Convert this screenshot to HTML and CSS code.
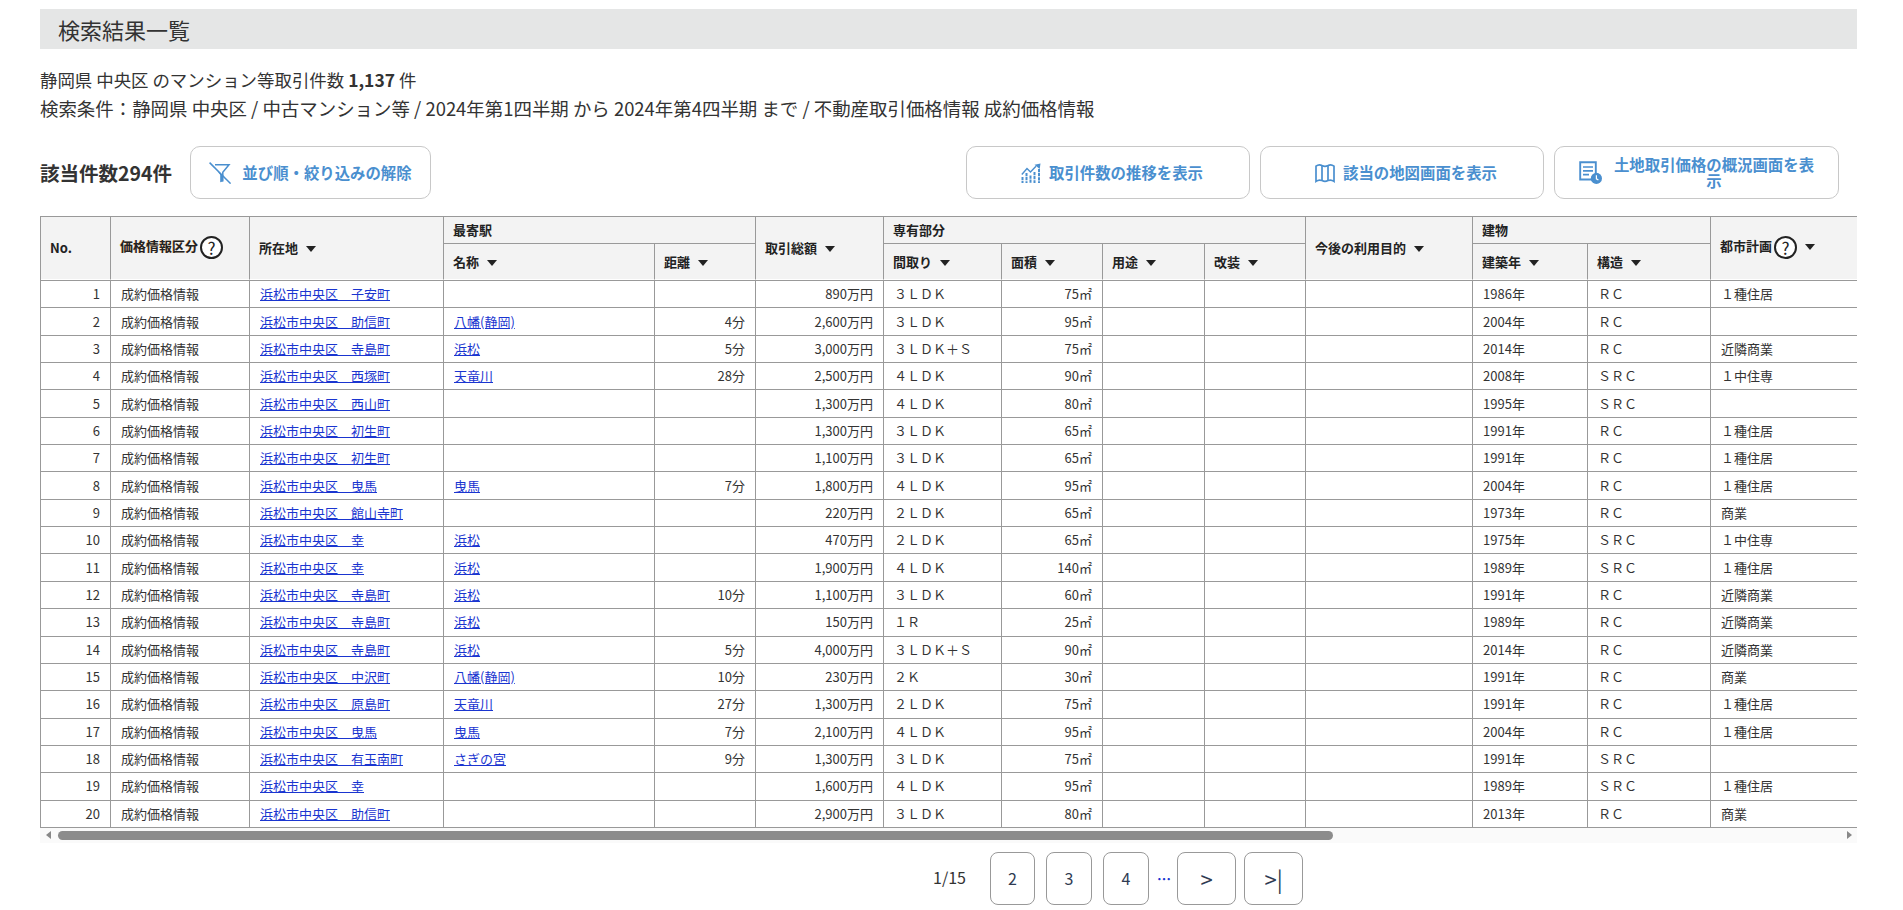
FILE: index.html
```html
<!DOCTYPE html>
<html lang="ja">
<head>
<meta charset="utf-8">
<title>検索結果一覧</title>
<link rel="stylesheet" href="styles.css">
</head>
<body>
<main class="page">
  <h1 class="title">検索結果一覧</h1>
  <div class="summary">
    <p class="sum-total">静岡県 中央区 のマンション等取引件数 <b>1,137</b> 件</p>
    <p class="sum-cond">検索条件：静岡県 中央区 / 中古マンション等 / 2024年第1四半期 から 2024年第4四半期 まで / 不動産取引価格情報 成約価格情報</p>
  </div>
  <div class="toolbar">
    <div class="count">該当件数294件</div>
    <button class="btn btn-reset">
      <svg class="ico ico-filter" viewBox="0 0 22 22"><path d="M6 2.8h14l-6.2 7.4v9.3" fill="none" stroke="currentColor" stroke-width="1.5"/><path d="M8.6 9.8l2.6 3v7.4l2.6-.6v-6.5z" fill="currentColor"/><path d="M.6.6l21 21" stroke="currentColor" stroke-width="1.5"/></svg>
      <span>並び順・絞り込みの解除</span>
    </button>
    <div class="actions">
      <button class="btn btn-shift">
        <svg class="ico" viewBox="0 0 20 20"><path d="M.8 11.5L6 5.5l3.5 3.5L15 3.2" fill="none" stroke="currentColor" stroke-width="1.4"/><path d="M13.5 1.8L19.5.5l-.8 5.5z" fill="currentColor"/><path d="M1.5 14v6M5.5 10v10M9.5 12.5V20M13.5 9v11M18 6v14" stroke="currentColor" stroke-width="2" stroke-dasharray="3.2 .9"/></svg>
        <span>取引件数の推移を表示</span>
      </button>
      <button class="btn btn-shift">
        <svg class="ico" viewBox="0 0 20 20"><path d="M1 3.2Q4 .8 7 2.6 10 4.2 13 2.6 16 .8 19 3.2V18.4Q16 16.2 13 17.6 10 19.2 7 17.6 4 16.2 1 18.4z" fill="none" stroke="currentColor" stroke-width="1.7"/><path d="M7 2.6v15M13 2.6v15" stroke="currentColor" stroke-width="1.7"/></svg>
        <span>該当の地図画面を表示</span>
      </button>
      <button class="btn btn-wrap">
        <svg class="ico ico-report" viewBox="0 0 23 23"><path d="M13 18.5H1.2V1.2h15.6v11" fill="none" stroke="currentColor" stroke-width="1.9"/><path d="M4 6h10M4 9.8h10M4 13.6h6" stroke="currentColor" stroke-width="1.7"/><circle cx="17.4" cy="17.4" r="5.6" fill="currentColor"/><path d="M17.4 14.2v3.6l2 1.2" fill="none" stroke="#fff" stroke-width="1.2"/></svg>
        <span>土地取引価格の概況画面を表示</span>
      </button>
    </div>
  </div>
  <div class="scroller">
    <table class="results">
      <colgroup>
        <col class="c-no"><col class="c-kind"><col class="c-addr"><col class="c-stn"><col class="c-dist"><col class="c-price"><col class="c-plan"><col class="c-area"><col class="c-use"><col class="c-reno"><col class="c-purp"><col class="c-year"><col class="c-str"><col class="c-city"><col class="c-rest">
      </colgroup>
      <thead>
        <tr>
          <th rowspan="2">No.</th>
          <th rowspan="2"><span class="fringe">価格情報区分</span><span class="help">?</span></th>
          <th rowspan="2">所在地<i class="sort"></i></th>
          <th colspan="2" class="top">最寄駅</th>
          <th rowspan="2">取引総額<i class="sort"></i></th>
          <th colspan="4" class="top">専有部分</th>
          <th rowspan="2">今後の利用目的<i class="sort"></i></th>
          <th colspan="2" class="top">建物</th>
          <th rowspan="2">都市計画<span class="help">?</span><i class="sort"></i></th>
          <th rowspan="2"></th>
        </tr>
        <tr>
          <th>名称<i class="sort"></i></th>
          <th>距離<i class="sort"></i></th>
          <th>間取り<i class="sort"></i></th>
          <th>面積<i class="sort"></i></th>
          <th>用途<i class="sort"></i></th>
          <th>改装<i class="sort"></i></th>
          <th>建築年<i class="sort"></i></th>
          <th>構造<i class="sort"></i></th>
        </tr>
      </thead>
      <tbody>
        <tr><td class="r">1</td><td>成約価格情報</td><td><a href="#">浜松市中央区　子安町</a></td><td></td><td class="r"></td><td class="r">890万円</td><td>３ＬＤＫ</td><td class="r">75㎡</td><td></td><td></td><td></td><td>1986年</td><td>ＲＣ</td><td>１種住居</td><td></td></tr>
        <tr><td class="r">2</td><td>成約価格情報</td><td><a href="#">浜松市中央区　助信町</a></td><td><a href="#">八幡(静岡)</a></td><td class="r">4分</td><td class="r">2,600万円</td><td>３ＬＤＫ</td><td class="r">95㎡</td><td></td><td></td><td></td><td>2004年</td><td>ＲＣ</td><td></td><td></td></tr>
        <tr><td class="r">3</td><td>成約価格情報</td><td><a href="#">浜松市中央区　寺島町</a></td><td><a href="#">浜松</a></td><td class="r">5分</td><td class="r">3,000万円</td><td>３ＬＤＫ＋Ｓ</td><td class="r">75㎡</td><td></td><td></td><td></td><td>2014年</td><td>ＲＣ</td><td>近隣商業</td><td></td></tr>
        <tr><td class="r">4</td><td>成約価格情報</td><td><a href="#">浜松市中央区　西塚町</a></td><td><a href="#">天竜川</a></td><td class="r">28分</td><td class="r">2,500万円</td><td>４ＬＤＫ</td><td class="r">90㎡</td><td></td><td></td><td></td><td>2008年</td><td>ＳＲＣ</td><td>１中住専</td><td></td></tr>
        <tr><td class="r">5</td><td>成約価格情報</td><td><a href="#">浜松市中央区　西山町</a></td><td></td><td class="r"></td><td class="r">1,300万円</td><td>４ＬＤＫ</td><td class="r">80㎡</td><td></td><td></td><td></td><td>1995年</td><td>ＳＲＣ</td><td></td><td></td></tr>
        <tr><td class="r">6</td><td>成約価格情報</td><td><a href="#">浜松市中央区　初生町</a></td><td></td><td class="r"></td><td class="r">1,300万円</td><td>３ＬＤＫ</td><td class="r">65㎡</td><td></td><td></td><td></td><td>1991年</td><td>ＲＣ</td><td>１種住居</td><td></td></tr>
        <tr><td class="r">7</td><td>成約価格情報</td><td><a href="#">浜松市中央区　初生町</a></td><td></td><td class="r"></td><td class="r">1,100万円</td><td>３ＬＤＫ</td><td class="r">65㎡</td><td></td><td></td><td></td><td>1991年</td><td>ＲＣ</td><td>１種住居</td><td></td></tr>
        <tr><td class="r">8</td><td>成約価格情報</td><td><a href="#">浜松市中央区　曳馬</a></td><td><a href="#">曳馬</a></td><td class="r">7分</td><td class="r">1,800万円</td><td>４ＬＤＫ</td><td class="r">95㎡</td><td></td><td></td><td></td><td>2004年</td><td>ＲＣ</td><td>１種住居</td><td></td></tr>
        <tr><td class="r">9</td><td>成約価格情報</td><td><a href="#">浜松市中央区　館山寺町</a></td><td></td><td class="r"></td><td class="r">220万円</td><td>２ＬＤＫ</td><td class="r">65㎡</td><td></td><td></td><td></td><td>1973年</td><td>ＲＣ</td><td>商業</td><td></td></tr>
        <tr><td class="r">10</td><td>成約価格情報</td><td><a href="#">浜松市中央区　幸</a></td><td><a href="#">浜松</a></td><td class="r"></td><td class="r">470万円</td><td>２ＬＤＫ</td><td class="r">65㎡</td><td></td><td></td><td></td><td>1975年</td><td>ＳＲＣ</td><td>１中住専</td><td></td></tr>
        <tr><td class="r">11</td><td>成約価格情報</td><td><a href="#">浜松市中央区　幸</a></td><td><a href="#">浜松</a></td><td class="r"></td><td class="r">1,900万円</td><td>４ＬＤＫ</td><td class="r">140㎡</td><td></td><td></td><td></td><td>1989年</td><td>ＳＲＣ</td><td>１種住居</td><td></td></tr>
        <tr><td class="r">12</td><td>成約価格情報</td><td><a href="#">浜松市中央区　寺島町</a></td><td><a href="#">浜松</a></td><td class="r">10分</td><td class="r">1,100万円</td><td>３ＬＤＫ</td><td class="r">60㎡</td><td></td><td></td><td></td><td>1991年</td><td>ＲＣ</td><td>近隣商業</td><td></td></tr>
        <tr><td class="r">13</td><td>成約価格情報</td><td><a href="#">浜松市中央区　寺島町</a></td><td><a href="#">浜松</a></td><td class="r"></td><td class="r">150万円</td><td>１Ｒ</td><td class="r">25㎡</td><td></td><td></td><td></td><td>1989年</td><td>ＲＣ</td><td>近隣商業</td><td></td></tr>
        <tr><td class="r">14</td><td>成約価格情報</td><td><a href="#">浜松市中央区　寺島町</a></td><td><a href="#">浜松</a></td><td class="r">5分</td><td class="r">4,000万円</td><td>３ＬＤＫ＋Ｓ</td><td class="r">90㎡</td><td></td><td></td><td></td><td>2014年</td><td>ＲＣ</td><td>近隣商業</td><td></td></tr>
        <tr><td class="r">15</td><td>成約価格情報</td><td><a href="#">浜松市中央区　中沢町</a></td><td><a href="#">八幡(静岡)</a></td><td class="r">10分</td><td class="r">230万円</td><td>２Ｋ</td><td class="r">30㎡</td><td></td><td></td><td></td><td>1991年</td><td>ＲＣ</td><td>商業</td><td></td></tr>
        <tr><td class="r">16</td><td>成約価格情報</td><td><a href="#">浜松市中央区　原島町</a></td><td><a href="#">天竜川</a></td><td class="r">27分</td><td class="r">1,300万円</td><td>２ＬＤＫ</td><td class="r">75㎡</td><td></td><td></td><td></td><td>1991年</td><td>ＲＣ</td><td>１種住居</td><td></td></tr>
        <tr><td class="r">17</td><td>成約価格情報</td><td><a href="#">浜松市中央区　曳馬</a></td><td><a href="#">曳馬</a></td><td class="r">7分</td><td class="r">2,100万円</td><td>４ＬＤＫ</td><td class="r">95㎡</td><td></td><td></td><td></td><td>2004年</td><td>ＲＣ</td><td>１種住居</td><td></td></tr>
        <tr><td class="r">18</td><td>成約価格情報</td><td><a href="#">浜松市中央区　有玉南町</a></td><td><a href="#">さぎの宮</a></td><td class="r">9分</td><td class="r">1,300万円</td><td>３ＬＤＫ</td><td class="r">75㎡</td><td></td><td></td><td></td><td>1991年</td><td>ＳＲＣ</td><td></td><td></td></tr>
        <tr><td class="r">19</td><td>成約価格情報</td><td><a href="#">浜松市中央区　幸</a></td><td></td><td class="r"></td><td class="r">1,600万円</td><td>４ＬＤＫ</td><td class="r">95㎡</td><td></td><td></td><td></td><td>1989年</td><td>ＳＲＣ</td><td>１種住居</td><td></td></tr>
        <tr><td class="r">20</td><td>成約価格情報</td><td><a href="#">浜松市中央区　助信町</a></td><td></td><td class="r"></td><td class="r">2,900万円</td><td>３ＬＤＫ</td><td class="r">80㎡</td><td></td><td></td><td></td><td>2013年</td><td>ＲＣ</td><td>商業</td><td></td></tr>
      </tbody>
    </table>
  </div>
  <div class="hbar">
    <span class="hbar-btn"><i class="arrow-left"></i></span>
    <div class="hbar-track"><div class="hbar-thumb"></div></div>
    <span class="hbar-btn"><i class="arrow-right"></i></span>
  </div>
  <nav class="pager">
    <span class="pos">1/15</span>
    <a class="pg pg-first" href="#">2</a>
    <a class="pg" href="#">3</a>
    <a class="pg" href="#">4</a>
    <span class="dots">…</span>
    <a class="pg pg-wide" href="#">&gt;</a>
    <a class="pg pg-wide pg-last" href="#">&gt;|</a>
  </nav>
</main>
</body>
</html>
```

FILE: styles.css
```css
html, body { margin: 0; padding: 0; background: #fff; }
body {
  font-family: "Noto Sans CJK JP", "Noto Sans", sans-serif;
  color: #333;
  overflow: hidden;
}
.page { padding: 9px 46px 0 40px; }
.title {
  margin: 0 0 17px;
  height: 40px;
  padding-left: 18px;
  background: #e5e6e6;
  font-size: 22px;
  font-weight: 400;
  line-height: 40px;
}
.summary { line-height: 28px; }
.summary p { margin: 0; white-space: nowrap; }
.sum-total { font-size: 17.45px; }
.sum-cond { font-size: 18.46px; }
.toolbar {
  display: flex;
  align-items: center;
  height: 53px;
  margin: 24px 0 17px;
}
.count { font-size: 19.5px; font-weight: 700; width: 150px; flex: none; }
.actions { display: flex; gap: 10px; margin-left: auto; margin-right: 18px; }
.btn {
  box-sizing: border-box;
  display: flex;
  align-items: center;
  justify-content: center;
  gap: 8px;
  width: 284px;
  height: 53px;
  padding: 0;
  border: 1px solid #c8c8c8;
  border-radius: 10px;
  background: #fff;
  color: #4a8fcf;
  font-family: inherit;
  font-size: 15.4px;
  font-weight: 700;
  line-height: 15.4px;
}
.btn-reset { width: 241px; gap: 11px; }
.btn-shift { padding-left: 8px; }
.btn-wrap { width: 285px; gap: 12px; }
.btn-wrap span { width: 201px; text-align: center; flex: none; }
.ico { width: 20px; height: 20px; flex: none; }
.ico-filter { width: 22px; height: 22px; }
.ico-report { width: 23px; height: 23px; }

.scroller {
  width: 1817px;
  overflow: hidden;
}
.hbar {
  display: flex;
  width: 1817px;
  height: 15px;
  background: #fafafa;
}
.hbar-btn {
  display: flex;
  align-items: center;
  justify-content: center;
  width: 15px;
  flex: none;
}
.hbar-track { flex: 1; padding: 3px 0 3px 3px; }
.hbar-thumb {
  width: 1275px;
  height: 9px;
  border-radius: 5px;
  background: #8c8c8c;
}
.arrow-left {
  margin-left: 1px;
  border-top: 4.5px solid transparent;
  border-bottom: 4.5px solid transparent;
  border-right: 5px solid #888;
}
.arrow-right {
  margin-right: 1px;
  border-top: 4.5px solid transparent;
  border-bottom: 4.5px solid transparent;
  border-left: 5px solid #888;
}

.results {
  width: 2537px;
  table-layout: fixed;
  border-collapse: separate;
  border-spacing: 0;
  border-top: 1px solid #999;
  border-left: 1px solid #999;
  font-size: 13px;
  line-height: 1;
  color: #333;
}
.c-no { width: 70px; }
.c-kind { width: 139px; }
.c-addr { width: 194px; }
.c-stn { width: 211px; }
.c-dist { width: 101px; }
.c-price { width: 128px; }
.c-plan { width: 118px; }
.c-area { width: 101px; }
.c-use { width: 102px; }
.c-reno { width: 101px; }
.c-purp { width: 167px; }
.c-year { width: 115px; }
.c-str { width: 123px; }
.c-city { width: 160px; }
.c-rest { width: 706px; }
.results th {
  box-sizing: border-box;
  padding: 0 9px;
  background: #f3f3f3;
  border-right: 1px solid #999;
  border-bottom: 1px solid #999;
  font-weight: 700;
  color: #222;
  text-align: left;
  white-space: nowrap;
}
.results thead tr:first-child th.top { height: 27px; padding-bottom: 2px; }
.results thead tr:last-child th { height: 36px; }
.results th[rowspan] { padding-bottom: 2px; }
.results th[rowspan], .results thead tr:last-child th { border-bottom-color: #fff; }
.results td {
  box-sizing: border-box;
  height: 27.35px;
  padding: 0 10px 1px;
  border-right: 1px solid #999;
  border-bottom: 1px solid #999;
  white-space: nowrap;
}
.results tbody tr:first-child td { border-top: 1px solid #999; height: 28.4px; }
.results td.r { text-align: right; }
.results a { color: #1a35d0; }
.sort {
  display: inline-block;
  width: 0;
  height: 0;
  margin-left: 8px;
  border-left: 5px solid transparent;
  border-right: 5px solid transparent;
  border-top: 6px solid #222;
  vertical-align: 1px;
}
.help {
  display: inline-flex;
  align-items: center;
  justify-content: center;
  box-sizing: border-box;
  width: 23px;
  height: 23px;
  margin-left: 2px;
  border: 2px solid #222;
  border-radius: 50%;
  background: #fff;
  font-size: 17px;
  font-weight: 400;
  vertical-align: middle;
}
.fringe { text-shadow: -0.5px 0 0 rgba(230, 140, 40, .55); }

.pager {
  display: flex;
  align-items: center;
  gap: 11px;
  margin: 9px 0 0 893px;
  height: 53px;
}
.pos { width: 46px; font-size: 16px; position: relative; top: -1px; }
.pg {
  box-sizing: border-box;
  display: flex;
  align-items: center;
  justify-content: center;
  width: 46px;
  height: 53px;
  border: 1px solid #999;
  border-radius: 8px;
  color: #2f3b52;
  font-size: 16px;
  text-decoration: none;
}
.pg-first { width: 45px; }
.pg-wide { width: 59px; font-size: 22px; }
.pg-last { margin-left: -3px; }
.dots { width: 14px; margin: 0 -5px 0 -3px; color: #1a35d0; font-size: 14px; font-weight: 700; text-align: center; }
```
